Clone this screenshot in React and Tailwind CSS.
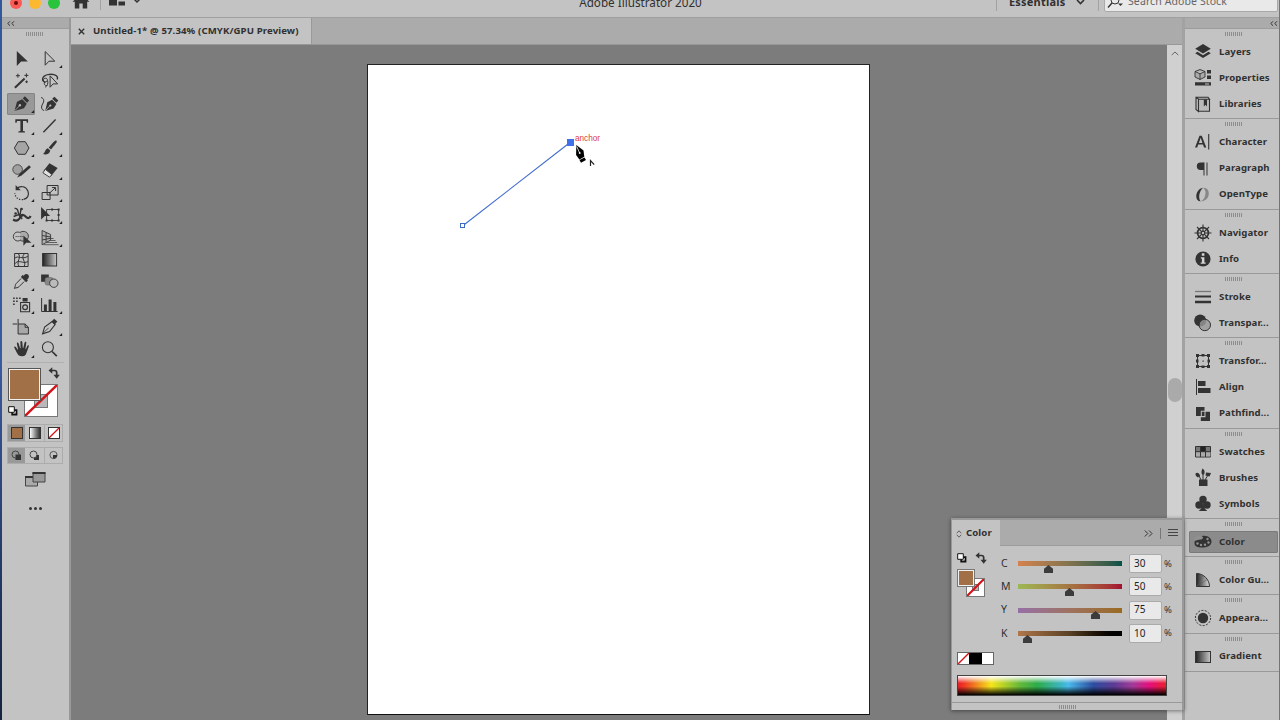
import React, { useState } from 'react';

// Tool glyphs, each drawn in a 28x22 cell
const toolIcons = {
  selection: <path d="M9.2 3v15l4.3-4.4h6.7z" fill="#333" />,
  direct: <path d="M9.6 3.6v13.6l3.8-4h5.8z" fill="none" stroke="#333" strokeWidth="1" />,
  wand: (
    <g fill="none" stroke="#333">
      <path d="M7.3 17.8L17 8.6" strokeWidth="2" />
      <path d="M10.3 3.7v4M8.3 5.7h4M18.8 3.4v4M16.8 5.4h4M19 10.5v2.6M17.7 11.8h2.6" strokeWidth="1" />
    </g>
  ),
  lasso: (
    <g fill="none" stroke="#333" strokeWidth="1">
      <path d="M9.700 12.500C5 10.500 6.500 4.800 14 4.300c6.500-.4 9 2.400 7.500 5.200" strokeWidth="1.300" />
      <path d="M9.600 8.200c-3 .5-2.500 4 .2 3.700 2.600-.4 2.700-3.300.3-3.700zM12 10.500c.8 3-.3 5.700-2.500 6.800M9.500 12c-2 2 0 4 2 3.500" />
      <path d="M14.500 5.800v11.400l3-3.300h4.500z" fill="#c3c3c3" />
    </g>
  ),
  pen: (
    <g>
      <path d="M6.800 18l2.600-9.200 5.200-2.500 4.600 4.400-2.800 4.600z" fill="#333" />
      <path d="M15.200 5.500l2-2.200 4.300 4.200-2 2.300z" fill="#333" />
      <path d="M7.200 17.600l4.700-4.800" stroke="#b5b5b5" strokeWidth=".8" />
      <circle cx="12.300" cy="12.300" r="1.200" fill="#b5b5b5" />
    </g>
  ),
  curvature: (
    <g>
      <path d="M9.500 18l2.200-8.700 4.800-2.500 4.300 4.200-2.800 4.400z" fill="#333" />
      <path d="M16.600 5.700l2.200-2 4 3.800-2.100 2.300z" fill="#333" />
      <path d="M9.800 17.600l4.500-4.800" stroke="#c3c3c3" strokeWidth=".8" />
      <circle cx="14.700" cy="12.500" r="1.100" fill="#c3c3c3" />
      <path d="M5.500 4.500c3.500 1 3 4 1.500 6.500s-1.500 6 1.500 6.500" fill="none" stroke="#333" strokeWidth="1" />
    </g>
  ),
  type: <path d="M7.700 4.300h12.800v3.500h-1.300l-.4-1.700h-3.400v9.900l2 .5v1.100h-6.600v-1.100l2-.5V6.100H9.400L9 7.800H7.700z" fill="#333" />,
  line: <path d="M7.800 17.200L20 4.500" stroke="#333" strokeWidth="1.400" />,
  polygon: <path d="M10.500 4.700h7.200l3.700 6.300-3.700 6.300h-7.200L6.800 11z" fill="#a5a5a5" stroke="#333" strokeWidth="1" />,
  brush: (
    <g fill="#333">
      <path d="M20.600 3.600c1.400 1.100.8 2-5.200 8.900l-2.300-2C17.600 5.600 19.600 3 20.600 3.600z" />
      <path d="M12.300 11.300l2.300 2.100c-.3 3.600-4.300 4.700-7.300 3.600 2.200-.5 2-5 5-5.700z" />
    </g>
  ),
  shaper: (
    <g>
      <circle cx="10" cy="9.500" r="4.800" fill="#a0a0a0" stroke="#444" strokeWidth=".9" />
      <path d="M9.500 17.500l2.600-4L21.500 5.300l1.800 2L14 15.600z" fill="#333" />
    </g>
  ),
  eraser: (
    <g>
      <path d="M13.800 3.200l8.200 4.700-6.500 8.200-7.500-5.400z" fill="#333" />
      <path d="M9.700 9.300l6.600 5.300-2.300 2.600-6.700-4.400z" fill="#e2e2e2" stroke="#333" strokeWidth=".9" />
    </g>
  ),
  rotate: (
    <g fill="none" stroke="#333">
      <path d="M9 6.500c4-3.500 9.500-2 11.300 2.500s-.8 7.600-4.300 8.400" strokeWidth="1.200" />
      <path d="M15.500 17.500c-4 .9-8-2-8.300-6.500" strokeWidth="1.200" strokeDasharray="1.300 1.500" />
      <path d="M8 3v5.300h5.200z" fill="#333" stroke="none" />
    </g>
  ),
  scale: (
    <g fill="none" stroke="#333" strokeWidth="1">
      <path d="M11.500 3.500h11v9.500h-11zM6.500 10.500h8v7h-8z" />
      <path d="M13.500 11.500l6-5.500M16.500 5.500h3.500v3.500" />
    </g>
  ),
  width: (
    <g fill="none" stroke="#333">
      <path d="M5.500 15.500c4 2.500 6.500 0 7.500-3s4-1 5.500.5 3.500 1.500 4.500-1" strokeWidth="2.200" />
      <path d="M7 4.500c2-.5 3.500 1.500 3.500 3.500s2.500 4 4.500 4.500M6 12.500l5-2 3.500 4.500M13.500 4.500l-1 6" strokeWidth="1.400" />
      <circle cx="8" cy="9.500" r="1.300" fill="#333" stroke="none" />
      <circle cx="14" cy="5" r="1.300" fill="#333" stroke="none" />
    </g>
  ),
  transform: (
    <g>
      <path d="M11 5.500h12v11H11z" fill="none" stroke="#333" strokeWidth=".9" />
      <path d="M15.500 4.500h2v2h-2zM22 4.500h2v2h-2zM22 10h2v2h-2zM22 15.500h2v2h-2zM15.500 15.500h2v2h-2zM10 15.500h2v2h-2z" fill="#333" />
      <path d="M5.500 3v12.500l3.600-3.600h5.400z" fill="#333" />
    </g>
  ),
  shapeBuilder: (
    <g>
      <circle cx="10.200" cy="9.500" r="4.500" fill="none" stroke="#333" strokeWidth=".9" />
      <path d="M12.500 5.300c4-2.300 8.300 0 8.300 4s-5 6.500-8.300 3.700" fill="#aaa" stroke="#333" strokeWidth=".9" />
      <path d="M8 9.500h8" stroke="#333" strokeWidth="1" strokeDasharray="1 1" />
      <path d="M15.800 8.500v10.300l2.800-3h5.200z" fill="#333" />
    </g>
  ),
  perspective: (
    <g fill="none" stroke="#333" strokeWidth=".9">
      <path d="M6.500 3.500v14.300L15 13V7.500z" fill="#b2b2b2" />
      <path d="M6.500 8.500L15 10M10.500 5.500V15M6.500 13l8.500-1.800" />
      <path d="M15 11.500h3M14 13.500h6M11 15.500h10.500M8 17.700h15" strokeWidth=".7" />
    </g>
  ),
  mesh: (
    <g fill="none" stroke="#333" strokeWidth="1">
      <path d="M7 4.500h13.500v13H7z" />
      <path d="M7 9.500c3-4 8 2 13.500-2.500M7 15c4-5.500 8 .5 13.500-2.500M10.500 4.500c4 4-2.500 8 1 13M17 4.500c-5 5 2.500 8-.5 13" />
    </g>
  ),
  gradient: <rect x="7" y="4.500" width="14" height="12.500" fill="url(#toolGradient)" stroke="#333" />,
  eyedropper: (
    <g>
      <path d="M16 4.800c1.500-2.200 3.500-2 4.600-1s1.200 3-1 4.700l.7.900-1.800 1.800-5.200-5.200L15 4.100z" fill="#333" />
      <path d="M13.500 7.500l-5 5.200c-1.400 1.500-.3 2.300-1.700 4.700 2.200-1 3.200-.3 4.500-1.600l5.200-5.200" fill="none" stroke="#333" strokeWidth="1" />
    </g>
  ),
  blend: (
    <g>
      <path d="M5.500 3.500h7.700v7.300H5.500z" fill="#333" />
      <rect x="9.500" y="6.500" width="8" height="7.500" rx="2" fill="#888" stroke="#666" strokeWidth=".6" />
      <circle cx="18.200" cy="12.200" r="4.200" fill="#bbb" stroke="#333" strokeWidth=".9" />
    </g>
  ),
  sprayer: (
    <g>
      <path d="M13 8.500h9v9.300h-9z" fill="none" stroke="#333" strokeWidth="1.100" />
      <path d="M15 4h5v3.500h-5zM5.500 3.500h1.600v1.600H5.500zM8.500 3.500h1.600v1.600H8.500zM11.500 3.500h1.600v1.600h-1.600zM5.500 6.500h1.600v1.600H5.500zM8.500 6.500h1.600v1.600H8.500zM5.500 9.500h1.600v1.600H5.500z" fill="#333" />
      <circle cx="17.500" cy="13.200" r="2.400" fill="none" stroke="#333" strokeWidth="1.200" />
    </g>
  ),
  graph: (
    <g>
      <path d="M6 4v13.500h16" fill="none" stroke="#333" strokeWidth="1" />
      <path d="M8.300 10.500h3v6.500h-3zM13 5.500h3v11.500h-3zM17.800 8h3v9h-3z" fill="#333" />
    </g>
  ),
  artboard: (
    <g fill="none" stroke="#333" strokeWidth="1">
      <path d="M10.500 8h7l3.300 3.200V18H10.500z" fill="#a8a8a8" />
      <path d="M10.500 3v5M5 8h4.500M17.500 8v3.300h3.300" />
    </g>
  ),
  slice: (
    <g>
      <path d="M7 17.800L9 11l7.500-5.500 3 3-5.500 7z" fill="none" stroke="#333" strokeWidth="1.100" />
      <path d="M16 5.500l2.500-2.700 3.200 2.700-2.500 3z" fill="#333" />
      <path d="M7 17.800l6-6" stroke="#333" strokeWidth=".8" />
    </g>
  ),
  hand: (
    <path d="M6.700 9.700c-.3-1.300 1.100-1.500 1.700-.5l2 2.800.1-.5-1.200-5.700c-.2-1.400 1.300-1.700 1.700-.4l1.500 4.900h.5L12.800 4c0-1.400 1.700-1.500 1.900-.1l.5 6.200h.5l1.300-5.500c.4-1.300 1.900-.9 1.700.4l-.9 6 .4.200 1.500-3.200c.6-1.200 1.900-.6 1.500.6l-2.300 6.200c-.6 2-1.500 3.400-4.200 3.400-3 0-4.400-1.300-5.300-3.300z" fill="#333" />
  ),
  zoom: (
    <g fill="none" stroke="#333">
      <circle cx="12.300" cy="9.300" r="5.500" strokeWidth="1.100" />
      <path d="M16.500 13.500l4.700 4.700" strokeWidth="1.700" />
    </g>
  ),
};

const tools = [
  { id: 'selection' }, { id: 'direct', more: true },
  { id: 'wand' }, { id: 'lasso' },
  { id: 'pen', more: true }, { id: 'curvature' },
  { id: 'type', more: true }, { id: 'line', more: true },
  { id: 'polygon', more: true }, { id: 'brush', more: true },
  { id: 'shaper', more: true }, { id: 'eraser', more: true },
  { id: 'rotate', more: true }, { id: 'scale', more: true },
  { id: 'width', more: true }, { id: 'transform', more: true },
  { id: 'shapeBuilder', more: true }, { id: 'perspective', more: true },
  { id: 'mesh' }, { id: 'gradient' },
  { id: 'eyedropper', more: true }, { id: 'blend' },
  { id: 'sprayer', more: true }, { id: 'graph', more: true },
  { id: 'artboard' }, { id: 'slice', more: true },
  { id: 'hand', more: true }, { id: 'zoom' },
];

// Dock glyphs, each drawn in a 20x20 box
const dockIcons = {
  layers: <path d="M10 2l7.800 4.800L10 11.500 2.200 6.800zM2.200 11.200l2.300-1.400L10 13.200l5.500-3.400 2.300 1.400-7.800 4.800z" fill="#333" />,
  properties: (
    <g>
      <path d="M7 1.500L12 3.500v5.500l-5 2.500-5-2.500V3.500zM2 3.500l5 2.300 5-2.300M7 5.800v5.700" fill="#aaa" stroke="#333" strokeWidth=".9" />
      <path d="M14 2h4v3.500h-4zM14 7.500h4V11h-4zM2 14.200h16v3.400H2z" fill="#333" />
      <path d="M12 16h4" stroke="#c3c3c3" />
    </g>
  ),
  libraries: (
    <g>
      <path d="M3 3.500L5.500 5v12.500L3 15.500zM3 3.200h12l1.500 2h-11M5.500 5.200h11v12h-11z" fill="#bbb" stroke="#333" strokeWidth="1.100" />
      <path d="M10.800 5.500H14v7l-1.600-1.700-1.600 1.700z" fill="#333" />
    </g>
  ),
  character: (
    <g>
      <path d="M2 15.500L6.500 3.700h2.300L13.300 15.500h-2.300l-1-2.900H5.200l-1 2.900zM5.900 10.900h3.500l-1.700-5.200z" fill="#333" fillRule="evenodd" />
      <path d="M15.700 2v15.500" stroke="#333" strokeWidth="1.100" />
    </g>
  ),
  paragraph: (
    <g>
      <path d="M14 3.500v13M11 3.500v13" stroke="#555" strokeWidth="1.300" />
      <path d="M11 3.500H7.500a3.700 3.700 0 000 7.400H11z" fill="#333" />
    </g>
  ),
  opentype: (
    <g>
      <path d="M10 2.700C5.800 3.300 3 7.800 3.300 11.800c.2 3 1.900 4.700 4.300 4.500C5 13 6.200 6 10 2.700z" fill="#333" />
      <path d="M10 2.700c4.200-.3 6.300 3 5.700 7-.6 4-4 6.800-8.100 6.600 4.500-1.800 7.200-10.300 2.400-13.600z" fill="#888" />
    </g>
  ),
  navigator: (
    <g fill="none" stroke="#333">
      <circle cx="10" cy="10" r="5.400" strokeWidth="1.700" />
      <circle cx="10" cy="10" r="1.800" strokeWidth="1.200" />
      <path d="M10 1.500v7M10 11.500v7M1.500 10h7M11.500 10h7M4 4l4.800 4.800M11.200 11.200L16 16M16 4l-4.800 4.800M8.800 11.200L4 16" strokeWidth="1.100" />
    </g>
  ),
  info: (
    <g>
      <circle cx="10" cy="10" r="7.600" fill="#333" />
      <path d="M8.800 4.300h2.600v2.400H8.800zM7.800 8.200h3.600v5.200h1.200v1.400H7.700v-1.400h1.200V9.600H7.800z" fill="#d5d5d5" />
    </g>
  ),
  stroke: (
    <g>
      <path d="M2 4.500h16" stroke="#777" strokeWidth="1.300" />
      <path d="M2 9.500h16" stroke="#333" strokeWidth="2" />
      <path d="M2 15h16" stroke="#333" strokeWidth="2.500" />
    </g>
  ),
  transparency: (
    <g>
      <circle cx="7.200" cy="7.500" r="6" fill="#333" />
      <circle cx="11.800" cy="12" r="5.700" fill="#999" fillOpacity=".8" stroke="#333" />
    </g>
  ),
  transform: (
    <g>
      <path d="M4.500 4.500h11v11h-11z" fill="none" stroke="#333" />
      <path d="M3 3h3v3H3zM8.500 3h3v2.500h-3zM14 3h3v3h-3zM3 8.500h2.500v3H3zM14.500 8.500H17v3h-2.500zM3 14h3v3H3zM8.500 14.500h3V17h-3zM14 14h3v3h-3zM9.500 9.500h1.200v1.200H9.500z" fill="#333" />
    </g>
  ),
  align: <path d="M3 2h1v16H3zM5 4h7.500v5H5zM5 11h12.500v5H5z" fill="#333" />,
  pathfinder: (
    <g>
      <path d="M3 3h8.500v3.700H7.800V12H3z" fill="#333" />
      <path d="M12.500 7.700H17V17H7.800v-3.700h4.700z" fill="#333" />
      <path d="M8.800 7.700h2.700v4.300H8.800z" fill="#333" />
    </g>
  ),
  swatches: (
    <g>
      <path d="M2.500 4.500h15v10.500h-15z" fill="#777" stroke="#333" />
      <path d="M7.500 4.500h5v5h-5z" fill="#222" />
      <path d="M3 10h4.500v4.500H3zM13 10h4.500v4.500H13zM8 10h4.500v4.500H8z" fill="#aaa" />
      <path d="M2.500 9.700h15M7.500 4.500V15M12.500 4.500V15" stroke="#333" />
    </g>
  ),
  brushes: (
    <g>
      <path d="M6 11.500h8.500V18H6z" fill="#333" />
      <path d="M8 12L5 5.500M10 12V5M12 12l3-5" stroke="#333" />
      <path d="M2.500 5.500c2-2 4 0 4.500 2l-2 2c-1-.5-3-2-2.500-4zM9.500.5c2.500 1.500 2.500 4 1.500 6H9c-1-2-.5-4 .5-6zM13 4.500l5 .5-1.500 3.500-4-1z" fill="#333" />
    </g>
  ),
  symbols: (
    <g fill="#333">
      <circle cx="10" cy="5.500" r="3.700" />
      <circle cx="6" cy="11" r="3.700" />
      <circle cx="14" cy="11" r="3.700" />
      <path d="M9.200 8h1.600c-.2 5 .7 7 3.500 9H5.700c2.800-2 3.700-4 3.500-9z" />
    </g>
  ),
  color: (
    <g>
      <path d="M1.500 11c0-4.500 4-7.500 9.500-7.300 5 .2 7.800 3 7.500 6.300-.3 3.800-4.500 5.500-9.500 5.500-4.500 0-7.500-1-7.500-4.500z" fill="#333" />
      <g fill="#909090">
        <circle cx="4.500" cy="11.500" r="1.200" />
        <circle cx="8" cy="13" r="1.200" />
        <circle cx="12" cy="12.800" r="1.200" />
        <circle cx="15.500" cy="10.500" r="1.200" />
        <circle cx="14.500" cy="7" r="1.200" />
        <path d="M1 6.500c2-2.500 6-3.500 8-2.300 1.800 1.200 1 3.300-1.500 3.300-2 0-3.500 1-6 1.500z" />
      </g>
    </g>
  ),
  guide: (
    <g>
      <path d="M3.500 3.500c7 0 13 6 13 13h-13z" fill="url(#guideGradient)" stroke="#333" />
      <path d="M4 16L10 5.300M4 16l10-6.500" stroke="#555" strokeWidth=".5" />
    </g>
  ),
  appearance: (
    <g>
      <circle cx="10" cy="10" r="5.200" fill="#333" />
      <circle cx="10" cy="10" r="7.600" fill="none" stroke="#333" strokeDasharray="2 1.400" />
    </g>
  ),
  gradient: <rect x="2.500" y="4.500" width="15" height="11" fill="url(#toolGradient)" stroke="#333" />,
};

const dockGroups = [
  [['layers', 'Layers'], ['properties', 'Properties'], ['libraries', 'Libraries']],
  [['character', 'Character'], ['paragraph', 'Paragraph'], ['opentype', 'OpenType']],
  [['navigator', 'Navigator'], ['info', 'Info']],
  [['stroke', 'Stroke'], ['transparency', 'Transpar...']],
  [['transform', 'Transfor...'], ['align', 'Align'], ['pathfinder', 'Pathfind...']],
  [['swatches', 'Swatches'], ['brushes', 'Brushes'], ['symbols', 'Symbols']],
  [['color', 'Color']],
  [['guide', 'Color Gu...']],
  [['appearance', 'Appeara...']],
  [['gradient', 'Gradient']],
];

const channels = [
  { label: 'C', value: 30, bar: 'bg-linear-to-r from-[#d5824d] via-[#80734e] to-[#005248]' },
  { label: 'M', value: 50, bar: 'bg-linear-to-r from-[#9cb853] via-[#a57543] to-[#a40d32]' },
  { label: 'Y', value: 75, bar: 'bg-linear-to-r from-[#976fa5] via-[#9e725f] to-[#9a6b1c]' },
  { label: 'K', value: 10, bar: 'bg-linear-to-r from-[#b2774a] via-[#594025] to-black' },
];

const Grip = () => (
  <div className="flex h-[4px] gap-px">
    {[...Array(9)].map((_, i) => (
      <span key={i} className="w-px bg-[#8d8d8d]" />
    ))}
  </div>
);

const Slash = ({ thin }) => (
  <svg className="block h-full w-full" viewBox="0 0 20 20" preserveAspectRatio="none">
    <path d="M0 20L20 0" stroke="#d3151b" strokeWidth={thin ? 1.5 : 2.6} />
  </svg>
);

const SwapIcon = () => (
  <svg className="block h-[12px] w-[12px]" viewBox="0 0 12 12" fill="none" stroke="#333">
    <path d="M3 3.500h3.500q2.200 0 2.200 2.200v3" strokeWidth="1.700" />
    <path d="M.5 3.500L4.300.2v6.600zM5.500 7.800h6.300L8.700 11.800z" fill="#333" stroke="none" />
  </svg>
);

const DefaultIcon = () => (
  <svg className="block h-[10px] w-[10px]" viewBox="0 0 10 10">
    <path d="M4.200 4.200h4.300v4.300H4.200z" fill="#fff" stroke="#111" strokeWidth="1.800" />
    <path d="M.7.7h5.600v5.600H.7z" fill="#fff" stroke="#111" strokeWidth="1" />
  </svg>
);

const TitleBar = () => (
  <header className="h-[18px] shrink-0 overflow-hidden border-b border-[#a0a0a0] bg-[#c3c3c3]">
    <div className="relative -mt-[13px] flex h-[30px] items-center">
      <div className="ml-[8px] flex gap-[7px] pt-px">
        <span className="flex h-[12px] w-[12px] items-center justify-center rounded-full bg-[#fb5b54]">
          <span className="h-[4px] w-[4px] rounded-full bg-[#6b0a08]" />
        </span>
        <span className="h-[12px] w-[12px] rounded-full bg-[#fcb92f]" />
        <span className="h-[12px] w-[12px] rounded-full bg-[#27c43c]" />
      </div>
      <svg className="ml-[12px] h-[16px] w-[18px]" viewBox="0 0 18 16">
        <path d="M9 0l8.500 7.800h-2.300V14.500h-4.500V9.500H7.300v5H2.800V7.800H.5z" fill="#333" />
      </svg>
      <div className="ml-[10px] h-[16px] w-px bg-[#a2a2a2]" />
      <svg className="ml-[8px] h-[12px] w-[17px]" viewBox="0 0 17 12">
        <path d="M0 0h8v9.500H0zM9.500 0H16v4H9.500zM9.500 5.500H16v4H9.500z" fill="#333" />
      </svg>
      <svg className="ml-[7px] h-[8px] w-[8px]" viewBox="0 0 8 8">
        <path d="M1 1l3 3 3-3" fill="none" stroke="#333" strokeWidth="1.500" />
      </svg>
      <h1 className="ml-[437px] w-[125px] text-center text-[11.700px] leading-[30px] whitespace-nowrap text-[#303030]">
        Adobe Illustrator 2020
      </h1>
      <div className="ml-[293px] h-[17px] w-px bg-[#a2a2a2]" />
      <span className="ml-[12px] w-[59px] text-[11px] font-bold tracking-[0.200px] text-[#303030]">Essentials</span>
      <svg className="ml-[8px] h-[8px] w-[9px]" viewBox="0 0 9 8">
        <path d="M1 2l3.500 3.500L8 2" fill="none" stroke="#333" strokeWidth="1.600" />
      </svg>
      <div className="ml-[13px] h-[17px] w-px bg-[#a2a2a2]" />
      <div className="ml-[5px] flex h-[19px] w-[174px] items-center rounded-[2px] border border-[#a9a9a9] bg-[#e9e9e9]">
        <svg className="ml-[2px] h-[14px] w-[17px]" viewBox="0 0 17 14" fill="none" stroke="#333">
          <circle cx="8" cy="5" r="4" />
          <path d="M5 8l-4 4.500" strokeWidth="1.400" />
          <path d="M11 8.500h5L13.500 11z" fill="#333" stroke="none" />
        </svg>
        <span className="ml-[4px] text-[10.500px] tracking-[0.100px] whitespace-nowrap text-[#666]">Search Adobe Stock</span>
      </div>
    </div>
  </header>
);

const Toolbar = () => {
  const [active, setActive] = useState('pen');

  return (
    <aside className="flex w-[69px] shrink-0 flex-col border-r-2 border-[#989898] bg-[#c3c3c3]">
      <div className="flex h-[11px] shrink-0 items-center border-b border-[#9c9c9c] bg-[#ababab] pl-[5px]">
        <svg className="h-[5px] w-[8px]" viewBox="0 0 8 5" fill="none" stroke="#333">
          <path d="M3 .3L.8 2.500 3 4.700M7 .3L4.800 2.500 7 4.700" />
        </svg>
      </div>
      <div className="flex h-[19px] shrink-0 justify-center pt-[3px] pr-[2px]">
        <Grip />
      </div>
      <div className="ml-[5px] grid w-[56px] shrink-0 grid-cols-2">
        {tools.map(tool => (
          <button
            key={tool.id}
            onClick={() => setActive(tool.id)}
            className={`h-[22.340px] ${active === tool.id ? 'rounded-[2px] bg-[#999] ring-1 ring-[#848484] ring-inset' : ''}`}
          >
            <svg className="block h-[22px] w-[28px]" viewBox="-0.6 0 28 22">
              {toolIcons[tool.id]}
              {tool.more && <path d="M26.500 17v3h-3z" fill="#222" />}
            </svg>
          </button>
        ))}
      </div>
      <div className="mx-[5px] mt-px h-px shrink-0 bg-[#b0b0b0]" />

      {/* Fill and stroke swatches overlap each other */}
      <div className="relative mt-[5px] ml-[5px] h-[50px] w-[56px] shrink-0">
        <div className="absolute top-[16px] left-[17px] h-[33px] w-[34px] border border-[#777] bg-white">
          <div className="absolute top-[9px] left-[9px] h-[14px] w-[14px] border border-[#777] bg-[#b8b8b8]" />
          <div className="relative h-full"><Slash thin /></div>
        </div>
        <div className="absolute top-0 left-px flex h-[33px] w-[33px] border border-[#555] bg-[#f0f0f0] p-px">
          <div className="flex-1 bg-[#a17046]" />
        </div>
        <div className="absolute -top-px left-[41px]"><SwapIcon /></div>
        <div className="absolute top-[38px] left-px"><DefaultIcon /></div>
      </div>

      <div className="mt-[6px] ml-[5px] flex h-[18px] w-[56px] shrink-0 border border-[#acacac]">
        <div className="flex w-[17px] items-center justify-center bg-[#999]">
          <span className="h-[12px] w-[12px] border border-[#333] bg-[#a17046]" />
        </div>
        <div className="flex w-[20px] items-center justify-center border-r border-[#acacac]">
          <span className="h-[12px] w-[12px] border border-[#333] bg-linear-to-r from-white to-[#333]" />
        </div>
        <div className="flex flex-1 items-center justify-center">
          <span className="h-[12px] w-[12px] border border-[#333] bg-white"><Slash /></span>
        </div>
      </div>
      <div className="mt-[5px] ml-[5px] flex h-[17px] w-[56px] shrink-0 border border-[#acacac]">
        <div className="flex w-[17px] items-center justify-center bg-[#999]">
          <svg className="h-[11px] w-[11px]" viewBox="0 0 11 11">
            <circle cx="4.500" cy="4.500" r="3.500" fill="none" stroke="#444" />
            <path d="M4.500 4.500H10V10H4.500z" fill="#333" />
          </svg>
        </div>
        <div className="flex w-[20px] items-center justify-center border-r border-[#acacac]">
          <svg className="h-[11px] w-[11px]" viewBox="0 0 11 11">
            <path d="M5 5h5v5H5z" fill="#333" />
            <circle cx="4.500" cy="4.500" r="3.500" fill="#c3c3c3" stroke="#444" />
          </svg>
        </div>
        <div className="flex flex-1 items-center justify-center">
          <svg className="h-[11px] w-[11px]" viewBox="0 0 11 11">
            <circle cx="5.500" cy="5" r="3.600" fill="none" stroke="#555" />
            <path d="M5 5h4v1.500L7 8.500H5z" fill="#333" />
          </svg>
        </div>
      </div>
      <svg className="mt-[7px] ml-[22px] h-[17px] w-[22px] shrink-0" viewBox="0 0 22 17">
        <path d="M1.500 5.500h12v9.500h-12z" fill="#aaa" stroke="#444" />
        <path d="M1 5h12v2H1z" fill="#333" />
        <path d="M9 1.500h12v9.500H9z" fill="#999" stroke="#444" />
        <path d="M8.500 1h13v2h-13z" fill="#333" />
      </svg>
      <div className="mt-[19px] flex shrink-0 justify-center gap-[1.500px]">
        <span className="h-[3.500px] w-[3.500px] rounded-full bg-[#333]" />
        <span className="h-[3.500px] w-[3.500px] rounded-full bg-[#333]" />
        <span className="h-[3.500px] w-[3.500px] rounded-full bg-[#333]" />
      </div>
    </aside>
  );
};

const Artboard = () => (
  <div className="relative mt-[19px] ml-[296px] h-[651px] w-[503px] shrink-0 border border-[#222] border-b-[#111] bg-white">
    <svg className="block h-[200px] w-[300px]" viewBox="0 0 300 200">
      <path d="M94.500 161L202 77.500" stroke="#3f6ccb" strokeWidth="1.100" />
      <rect x="92.500" y="158.500" width="4" height="4" fill="#fff" stroke="#3f6ccb" />
      <rect x="199" y="74" width="7" height="7" fill="#3f70ea" />
      <g>
        <path d="M208.300 80l7.200 5.500.8 6.200-4.900 2.800-3.300-4.500z" fill="#000" />
        <path d="M208.800 81.500l2.600 6" stroke="#fff" strokeWidth=".8" />
        <circle cx="211.700" cy="88" r=".9" fill="#fff" />
        <path d="M211.500 95.100l5-2.700 1.500 2.700-5 2.700z" fill="#000" />
        <path d="M222.500 101v-5.500l3.700 4.200" fill="none" stroke="#222" strokeWidth="1.200" />
      </g>
    </svg>
    <span className="absolute top-[68px] left-[207px] font-['Liberation_Sans'] text-[8.200px] leading-[11px] text-[#dc3c46]">anchor</span>
  </div>
);

const ColorPanel = () => (
  <section className="absolute top-[518px] left-[951px] flex h-[192px] w-[233px] flex-col border-t-2 border-r-2 border-l border-[#999] bg-[#c3c3c3] shadow-[0_1px_4px_rgba(0,0,0,0.45)]">
    <div className="flex h-[26px] shrink-0 bg-[#ababab]">
      <div className="flex w-[48px] items-center bg-[#c3c3c3] pt-px pl-[4px]">
        <svg className="h-[8px] w-[6px]" viewBox="0 0 6 8" fill="none" stroke="#555" strokeWidth=".9">
          <path d="M.8 3.200L3 .8l2.200 2.400M.8 4.800L3 7.200l2.200-2.400" />
        </svg>
        <span className="ml-[4px] text-[9.600px] font-bold tracking-[0.100px] text-[#303030]">Color</span>
      </div>
      <div className="flex flex-1 items-center justify-end border-b border-[#9c9c9c] pt-px pr-[4px]">
        <svg className="h-[7px] w-[9px]" viewBox="0 0 9 7" fill="none" stroke="#333">
          <path d="M.8.500l3 3-3 3M5 .5l3 3-3 3" />
        </svg>
        <span className="mx-[7px] h-[11px] w-px bg-[#777]" />
        <svg className="h-[8px] w-[10px]" viewBox="0 0 10 8" stroke="#444">
          <path d="M0 .5h10M0 3.500h10M0 6.500h10" />
        </svg>
      </div>
    </div>
    <div className="flex h-[98px] shrink-0 pt-[6px]">
      <div className="w-[49px] pl-[5px]">
        <div className="flex h-[13px] items-start gap-[8px]">
          <div className="pt-px"><DefaultIcon /></div>
          <SwapIcon />
        </div>
        <div className="relative mt-[4px] h-[30px]">
          <div className="absolute top-[9px] left-[9px] h-[19px] w-[19px] border border-[#777] bg-white">
            <div className="absolute top-[5px] left-[5px] h-[7px] w-[7px] border border-[#777] bg-[#b8b8b8]" />
            <div className="relative h-full"><Slash /></div>
          </div>
          <div className="absolute top-0 left-0 flex h-[18px] w-[18px] border border-[#777] bg-[#f0f0f0] p-px">
            <div className="flex-1 bg-[#a17046]" />
          </div>
        </div>
      </div>
      <div className="flex-1">
        {channels.map(channel => (
          <div key={channel.label} className="flex h-[23.300px] items-center">
            <span className="w-[17px] text-[10.500px] text-[#303030]">{channel.label}</span>
            <div className="relative h-[5px] w-[104px]">
              <div className={`h-full ${channel.bar}`} />
              <svg
                className="absolute top-[3.500px] -ml-[5px] h-[8px] w-[9px]"
                viewBox="0 0 9 8"
                style={{ left: `${channel.value}%` }}
              >
                <path d="M4.500 0L9 3.800V8H0V3.800z" fill="#3c3c3c" />
              </svg>
            </div>
            <span className="ml-[7px] flex h-[19px] w-[33px] items-center rounded-[2px] border border-[#aaa] bg-[#e9e9e9] pb-px pl-[4px] text-[10px] text-[#222]">
              {channel.value}
            </span>
            <span className="ml-[2px] text-[9.500px] text-[#303030]">%</span>
          </div>
        ))}
      </div>
    </div>
    <div className="mt-[8px] ml-[5px] flex h-[13px] w-[37px] shrink-0 border border-[#666] bg-white">
      <span className="w-[11px]"><Slash /></span>
      <span className="w-[13px] bg-black" />
    </div>
    <div className="mt-[10px] ml-[5px] h-[21px] w-[210px] shrink-0 border border-[#444] bg-[linear-gradient(to_bottom,rgba(255,255,255,1)_0%,rgba(255,255,255,0)_38%,rgba(0,0,0,0)_55%,rgba(0,0,0,1)_100%),linear-gradient(to_right,#e91f28_0%,#ee3a24_3%,#f5e51b_16%,#62b83a_30%,#2eac4a_38%,#3cb6c8_50%,#4ab9ea_53%,#2d4da0_65%,#5c3a94_75%,#a33a98_84%,#e5107d_92%,#e91f28_100%)]" />
    <div className="mt-auto flex h-[8px] shrink-0 items-center justify-center border-t border-[#999]">
      <Grip />
    </div>
  </section>
);

const Dock = () => {
  const [open, setOpen] = useState('color');

  return (
    <aside className="w-[94px] shrink-0 bg-[#c3c3c3]">
      <div className="flex h-[11px] items-center justify-end border-b border-[#9c9c9c] bg-[#ababab] pr-px">
        <svg className="h-[5px] w-[8px]" viewBox="0 0 8 5" fill="none" stroke="#333">
          <path d="M3 .3L.8 2.500 3 4.700M7 .3L4.800 2.500 7 4.700" />
        </svg>
      </div>
      {dockGroups.map(group => (
        <div key={group[0][0]} className="border-b border-[#999] pb-[1.100px]">
          <div className="flex h-[10px] justify-center pt-[3px] pl-[2px]">
            <Grip />
          </div>
          {group.map(([id, label]) => (
            <button
              key={id}
              onClick={() => setOpen(id)}
              className="flex h-[26.100px] w-full items-center pr-px pl-[4px] text-left"
            >
              <span
                className={`flex h-[22px] w-full items-center pl-[4px] ${
                  open === id ? 'rounded-[2px] bg-[#8b8b8b] ring-1 ring-[#7a7a7a] ring-inset' : ''
                }`}
              >
                <svg className="h-[20px] w-[20px] shrink-0" viewBox="0 0 20 20">
                  {dockIcons[id]}
                </svg>
                <span className="ml-[6px] text-[9.600px] font-bold tracking-[0.100px] whitespace-nowrap text-[#303030]">{label}</span>
              </span>
            </button>
          ))}
        </div>
      ))}
    </aside>
  );
};

const App = () => {
  return (
    <div className="relative flex h-[720px] w-[1280px] overflow-hidden bg-[#c3c3c3] font-['Noto_Sans',sans-serif]">
      <svg className="absolute h-0 w-0">
        <defs>
          <linearGradient id="toolGradient">
            <stop offset="0" stopColor="#222" />
            <stop offset="1" stopColor="#c8c8c8" />
          </linearGradient>
          <linearGradient id="guideGradient">
            <stop offset="0" stopColor="#222" />
            <stop offset="1" stopColor="#ddd" />
          </linearGradient>
        </defs>
      </svg>
      <div className="w-[2px] shrink-0 bg-linear-to-b from-[#31589b] via-[#3a5aa0] to-[#14233f]" />
      <div className="flex w-[1277px] shrink-0 flex-col">
        <TitleBar />
        <div className="flex min-h-0 flex-1">
          <Toolbar />
          <main className="flex w-[1114px] shrink-0 flex-col border-r-3 border-[#a2a2a2]">
            <div className="flex h-[27px] shrink-0 border-b border-[#989898] bg-[#ababab]">
              <div className="flex w-[241px] items-center border-r border-[#999] bg-[#c3c3c3] pt-px pl-[7px]">
                <svg className="h-[7px] w-[7px]" viewBox="0 0 7 7">
                  <path d="M.8.800l5.400 5.400M6.200.800L.8 6.200" stroke="#333" strokeWidth="1.400" />
                </svg>
                <span className="ml-[8px] text-[9.600px] font-bold tracking-[0.120px] whitespace-nowrap text-[#303030]">
                  Untitled-1* @ 57.34% (CMYK/GPU Preview)
                </span>
              </div>
            </div>
            <div className="flex min-h-0 flex-1">
              <div className="flex-1 bg-[#7c7c7c]">
                <Artboard />
              </div>
              <div className="flex w-[15px] shrink-0 flex-col items-center bg-[#d0d0d0] pt-[6px]">
                <svg className="h-[5px] w-[8px]" viewBox="0 0 8 5" fill="none" stroke="#666">
                  <path d="M.7 4L4 1l3.300 3" />
                </svg>
                <div className="mt-[322px] h-[24px] w-[14px] rounded-full bg-[#aaa]" />
              </div>
            </div>
          </main>
          <Dock />
        </div>
      </div>
      <div className="w-px shrink-0 bg-[#77727a]" />
      <ColorPanel />
    </div>
  );
};

export default App;
